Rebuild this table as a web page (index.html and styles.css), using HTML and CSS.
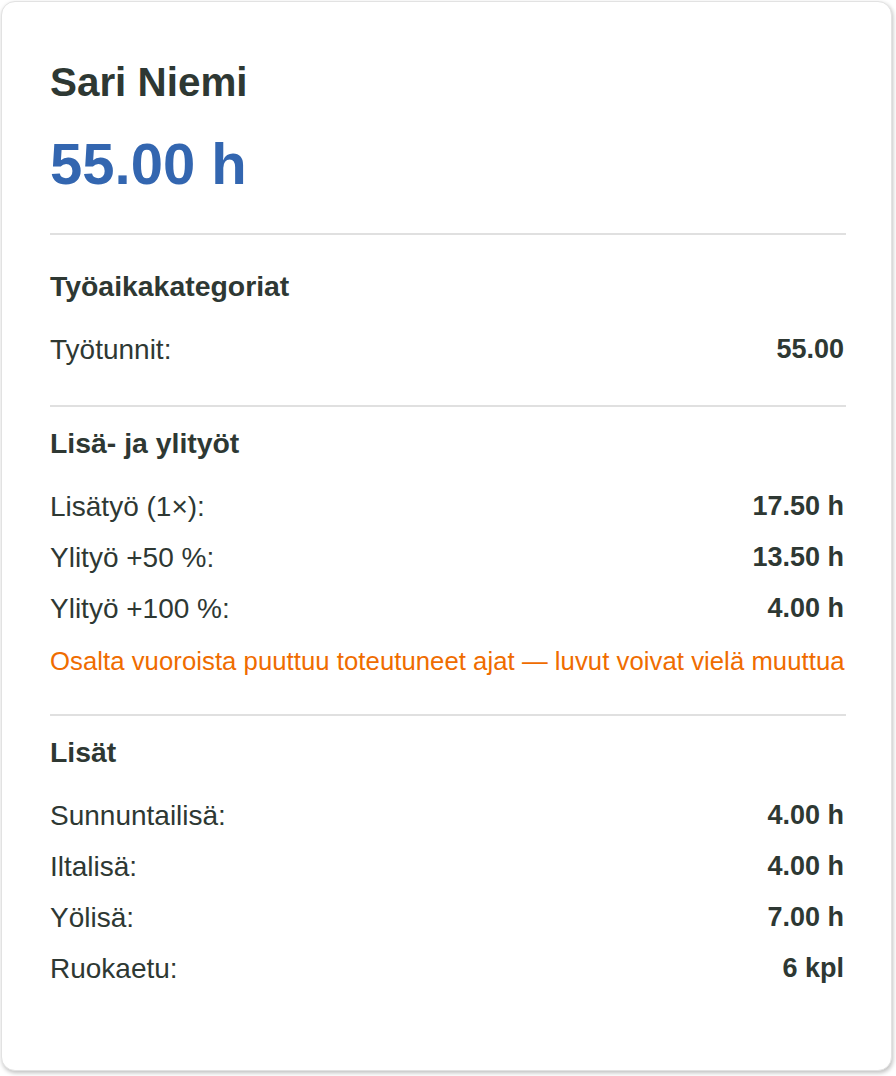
FILE: index.html
```html
<!DOCTYPE html>
<html lang="fi">
<head>
    <meta charset="UTF-8">
    <meta name="viewport" content="width=device-width, initial-scale=1.0">
    <title>Sari Niemi - Tuntiyhteenveto</title>
    <link rel="stylesheet" href="styles.css">
</head>
<body>
    <div class="card">
        <!-- Employee summary -->
        <div class="summary">
            <div class="employee-name">Sari Niemi</div>
            <div class="total-hours">55.00 h</div>
        </div>

        <!-- Work time categories -->
        <div class="section section-first">
            <div class="section-title">Työaikakategoriat</div>
            <div class="row">
                <span class="label">Työtunnit:</span>
                <span class="value">55.00</span>
            </div>
        </div>

        <!-- Extra and overtime -->
        <div class="section">
            <div class="section-title">Lisä- ja ylityöt</div>
            <div class="row">
                <span class="label">Lisätyö (1×):</span>
                <span class="value">17.50 h</span>
            </div>
            <div class="row">
                <span class="label">Ylityö +50 %:</span>
                <span class="value">13.50 h</span>
            </div>
            <div class="row">
                <span class="label">Ylityö +100 %:</span>
                <span class="value">4.00 h</span>
            </div>
            <div class="warning">Osalta vuoroista puuttuu toteutuneet ajat — luvut voivat vielä muuttua</div>
        </div>

        <!-- Allowances -->
        <div class="section">
            <div class="section-title">Lisät</div>
            <div class="row">
                <span class="label">Sunnuntailisä:</span>
                <span class="value">4.00 h</span>
            </div>
            <div class="row">
                <span class="label">Iltalisä:</span>
                <span class="value">4.00 h</span>
            </div>
            <div class="row">
                <span class="label">Yölisä:</span>
                <span class="value">7.00 h</span>
            </div>
            <div class="row">
                <span class="label">Ruokaetu:</span>
                <span class="value">6 kpl</span>
            </div>
        </div>
    </div>
</body>
</html>
```

FILE: styles.css
```css
* {
    margin: 0;
    padding: 0;
    box-sizing: border-box;
    font-family: 'Liberation Sans', Arial, sans-serif;
}

body {
    background-color: #ffffff;
    color: #2e3833;
}

.card {
    margin: 1px 4px 5px 1px;
    height: calc(100vh - 6px);
    background-color: white;
    border: 1px solid #e2e2e2;
    border-radius: 14px;
    box-shadow: 1px 2px 4px rgba(0, 0, 0, 0.25);
    padding: 56px 45px 0 48px;
}

.summary {
    padding-bottom: 34px;
}

.employee-name {
    font-size: 40.4px;
    line-height: 48px;
    font-weight: bold;
}

.total-hours {
    margin-top: 23px;
    font-size: 58px;
    line-height: 70px;
    font-weight: bold;
    color: #3366b0;
}

.section {
    border-top: 2px solid #e0e0e0;
    padding: 19px 0 30px;
}

.section-first {
    padding-top: 34px;
}

.section-title {
    font-size: 28.4px;
    line-height: 34px;
    font-weight: bold;
    margin-bottom: 21px;
}

.row {
    display: flex;
    justify-content: space-between;
    align-items: center;
    font-size: 28px;
    line-height: 41px;
    padding: 5px 2px 5px 0;
}

.value {
    font-size: 27px;
    font-weight: bold;
}

.warning {
    margin: 9px 0 5px;
    font-size: 25.7px;
    line-height: 36px;
    letter-spacing: 0.05px;
    color: #ef6c00;
}
```
